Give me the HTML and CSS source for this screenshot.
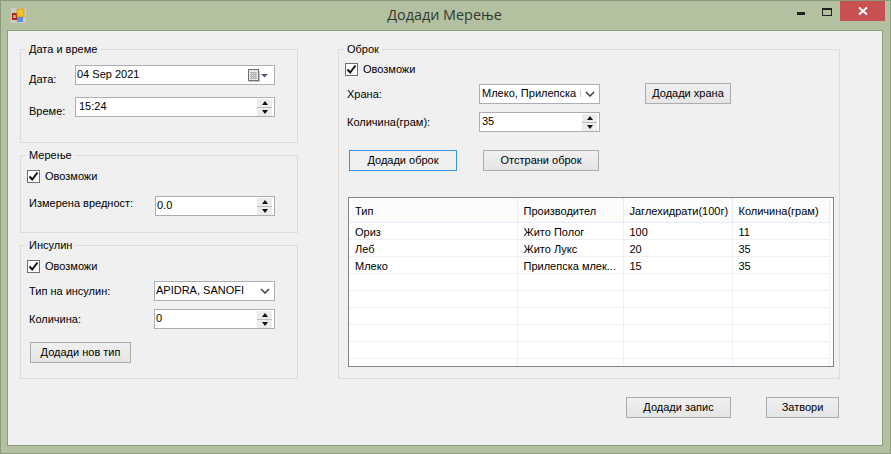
FILE: index.html
```html
<!DOCTYPE html>
<html lang="en">
<head>
    <meta name="viewport" content="width=device-width">
    <title>Додади Мерење</title>
    <link rel="stylesheet" href="styles.css">
</head>

<body>
    <div class="window">
        <div class="titlebar">
            <svg class="app-icon" width="15" height="15" viewBox="0 0 15 15">
                <rect x="0" y="0" width="15" height="15" fill="#c9ccc4"/>
                <rect x="1" y="5" width="5" height="7" fill="#b3201c"/>
                <rect x="2.5" y="7" width="2" height="3" fill="#f0c8b8"/>
                <rect x="6" y="1" width="7" height="8" fill="#f5c020" stroke="#b98a10" stroke-width="0.6"/>
                <rect x="6" y="9" width="6" height="5" fill="#5d8fd8"/>
            </svg>
            <div class="title">Додади Мерење</div>
            <div class="controls">
                <div class="ctl"><span class="ctl-min"></span></div>
                <div class="ctl"><span class="ctl-max"></span></div>
                <div class="ctl-close">
                    <svg width="10" height="10" viewBox="0 0 10 10"><path d="M1 1.5 L9 8.5 M9 1.5 L1 8.5" stroke="#fff" stroke-width="2"/></svg>
                </div>
            </div>
        </div>

        <div class="client">
            <div class="columns">
                <div class="left">
                    <div class="group group-date">
                        <div class="legend">Дата и време</div>
                        <div class="form form-date">
                            <div class="lbl lbl-low">Дата:</div>
                            <div class="field">
                                <span class="val val-date">04 Sep 2021</span>
                                <svg class="cal" width="21" height="13" viewBox="0 0 21 13">
                                    <rect x="0.5" y="0.5" width="10" height="11" fill="#e8e8e8" stroke="#77706a"/>
                                    <path d="M2 3.5h7M2 5.5h7M2 7.5h7M2 9.5h7M3.5 3v7M5.5 3v7M7.5 3v7" stroke="#b4b4b4" stroke-width="1"/>
                                    <path d="M1 12.5h11M11.5 2v10" stroke="#c8c4c0"/>
                                    <path d="M13 5h7l-3.500 3.500z" fill="#4d5b7c"/>
                                </svg>
                            </div>
                            <div class="lbl lbl-low">Време:</div>
                            <div class="field">
                                <span class="val val-time">15:24</span>
                                <div class="spin"><span class="up"></span><span class="down"></span></div>
                            </div>
                        </div>
                    </div>

                    <div class="group group-measure">
                        <div class="legend">Мерење</div>
                        <div class="check check-left">
                            <span class="box"><svg width="11" height="11" viewBox="0 0 11 11"><path d="M1.500 5.500 L4.200 8.500 L9.500 1.500" fill="none" stroke="#111" stroke-width="2"/></svg></span>
                            Овозможи
                        </div>
                        <div class="form form-measure">
                            <div class="lbl lbl-high">Измерена вредност:</div>
                            <div class="field">
                                <span class="val">0.0</span>
                                <div class="spin"><span class="up"></span><span class="down"></span></div>
                            </div>
                        </div>
                    </div>

                    <div class="group group-insulin">
                        <div class="legend">Инсулин</div>
                        <div class="check check-left">
                            <span class="box"><svg width="11" height="11" viewBox="0 0 11 11"><path d="M1.500 5.500 L4.200 8.500 L9.500 1.500" fill="none" stroke="#111" stroke-width="2"/></svg></span>
                            Овозможи
                        </div>
                        <div class="form form-insulin">
                            <div class="lbl">Тип на инсулин:</div>
                            <div class="field">
                                <span class="val">APIDRA, SANOFI</span>
                                <svg class="chev" width="10" height="6" viewBox="0 0 10 6"><path d="M1 1 L5 5 L9 1" fill="none" stroke="#444" stroke-width="1.600"/></svg>
                            </div>
                            <div class="lbl">Количина:</div>
                            <div class="field">
                                <span class="val">0</span>
                                <div class="spin"><span class="up"></span><span class="down"></span></div>
                            </div>
                        </div>
                        <div class="btn btn-newtype">Додади нов тип</div>
                    </div>
                </div>

                <div class="group group-meal">
                    <div class="legend">Оброк</div>
                    <div class="check check-right">
                        <span class="box"><svg width="11" height="11" viewBox="0 0 11 11"><path d="M1.500 5.500 L4.200 8.500 L9.500 1.500" fill="none" stroke="#111" stroke-width="2"/></svg></span>
                        Овозможи
                    </div>
                    <div class="meal-top">
                        <div class="form form-meal">
                            <div class="lbl">Храна:</div>
                            <div class="field">
                                <span class="val val-food">Млеко, Прилепска</span>
                                <svg class="chev" width="10" height="6" viewBox="0 0 10 6"><path d="M1 1 L5 5 L9 1" fill="none" stroke="#444" stroke-width="1.600"/></svg>
                            </div>
                            <div class="lbl">Количина(грам):</div>
                            <div class="field">
                                <span class="val val-qty">35</span>
                                <div class="spin"><span class="up"></span><span class="down"></span></div>
                            </div>
                        </div>
                        <div class="btn btn-food">Додади храна</div>
                    </div>
                    <div class="meal-actions">
                        <div class="btn btn-add">Додади оброк</div>
                        <div class="btn btn-remove">Отстрани оброк</div>
                    </div>
                    <div class="grid-box">
                        <table class="grid">
                            <colgroup>
                                <col class="c1"><col class="c2"><col class="c3"><col class="c4">
                            </colgroup>
                            <thead>
                                <tr><th>Тип</th><th>Производител</th><th>Јаглехидрати(100г)</th><th>Количина(грам)</th></tr>
                            </thead>
                            <tbody>
                                <tr><td>Ориз</td><td>Жито Полог</td><td>100</td><td>11</td></tr>
                                <tr><td>Леб</td><td>Жито Лукс</td><td>20</td><td>35</td></tr>
                                <tr><td>Млеко</td><td>Прилепска млек...</td><td>15</td><td>35</td></tr>
                                <tr><td></td><td></td><td></td><td></td></tr>
                                <tr><td></td><td></td><td></td><td></td></tr>
                                <tr><td></td><td></td><td></td><td></td></tr>
                                <tr><td></td><td></td><td></td><td></td></tr>
                                <tr><td></td><td></td><td></td><td></td></tr>
                                <tr><td></td><td></td><td></td><td></td></tr>
                            </tbody>
                        </table>
                    </div>
                </div>
            </div>

            <div class="footer">
                <div class="btn btn-save">Додади запис</div>
                <div class="btn btn-close">Затвори</div>
            </div>
        </div>
    </div>
</body>
</html>
```

FILE: styles.css
```css
html, body {
    margin: 0;
    padding: 0;
    background-color: #b4c1a1;
}
body {
    font-family: "Liberation Sans", sans-serif;
    font-size: 11px;
    color: #000;
}
.window {
    box-sizing: border-box;
    width: 891px;
    height: 454px;
    border: 1px solid #8b9a7c;
    background-color: #b4c1a1;
    display: flex;
    flex-direction: column;
    overflow: hidden;
}

/* title bar */
.titlebar {
    height: 29px;
    display: grid;
    grid-template-columns: 1fr auto 1fr;
    flex: none;
}
.app-icon {
    margin: 7px 0 0 10px;
}
.title {
    font-family: "Open Sans", sans-serif;
    font-size: 14.400px;
    line-height: 20px;
    padding: 4px 2px 0 0;
    color: #2f3a2f;
}
.controls {
    display: flex;
    justify-content: flex-end;
    align-items: flex-start;
    padding-right: 5px;
}
.ctl {
    width: 26px;
    height: 20px;
    display: flex;
    justify-content: center;
}
.ctl-min {
    width: 8px;
    height: 3px;
    margin-top: 11px;
    background-color: #222;
}
.ctl-max {
    box-sizing: border-box;
    width: 10px;
    height: 8px;
    margin-top: 7px;
    border: 1px solid #222;
    border-top-width: 2px;
}
.ctl-close {
    width: 45px;
    height: 20px;
    background-color: #c75050;
    display: flex;
    align-items: center;
    justify-content: center;
}

/* client area */
.client {
    flex: 1;
    margin: 0 7px 7px 6px;
    border: 1px solid #8b9a7c;
    background-color: #f0f0f0;
    padding: 18px 0 0 12px;
}
.columns {
    display: flex;
    gap: 40px;
}
.left {
    width: 278px;
    display: flex;
    flex-direction: column;
    gap: 12px;
}

/* group boxes */
.group {
    box-sizing: border-box;
    border: 1px solid #dcdcdc;
    padding: 0 8px;
}
.group-date { height: 94px; }
.group-measure { height: 78px; }
.group-insulin { height: 134px; }
.group-meal {
    width: 502px;
    height: 330px;
}
.legend {
    width: fit-content;
    height: 15px;
    line-height: 15px;
    margin: -8px 0 0 -3px;
    padding: 0 3px;
    background-color: #f0f0f0;
}

/* forms */
.form {
    display: grid;
    align-items: center;
}
.form-date {
    grid-template-columns: 46px 200px;
    row-gap: 12px;
    margin-top: 8px;
}
.form-measure {
    grid-template-columns: 126px 120px;
    margin-top: 12px;
}
.form-insulin {
    grid-template-columns: 125px 121px;
    row-gap: 8px;
    margin-top: 7px;
}
.form-meal {
    width: 253px;
    grid-template-columns: 132px 121px;
    row-gap: 8px;
}
.lbl {
    line-height: 15px;
}
.lbl-low {
    line-height: 12px;
    padding-top: 8px;
}
.lbl-high {
    line-height: 14px;
    padding-bottom: 6px;
}
.field {
    box-sizing: border-box;
    height: 20px;
    border: 1px solid #adadb3;
    background-color: #fff;
    display: flex;
    align-items: center;
    justify-content: space-between;
    padding-left: 1px;
    line-height: 15px;
    white-space: nowrap;
    overflow: hidden;
}
.val {
    padding-bottom: 1px;
}
.val-date {
    padding-bottom: 2px;
}
.val-time {
    padding-left: 2px;
}
.val-qty {
    padding-left: 1px;
}
.val-food {
    padding-left: 1px;
    display: flex;
    align-items: center;
    gap: 4px;
}
.val-food::after {
    content: "";
    width: 1px;
    height: 7px;
    background-color: #c8c8c8;
}
.cal {
    margin-right: 5px;
}
.chev {
    margin-right: 4px;
}

/* spinner */
.spin {
    width: 15px;
    height: 17px;
    margin-right: 2px;
    display: flex;
    flex-direction: column;
    gap: 1px;
    background-color: #bdbdbd;
    flex: none;
}
.up, .down {
    flex: 1;
    background-color: #ececec;
    display: flex;
    align-items: center;
    justify-content: center;
}
.up::after {
    content: "";
    border-left: 3.500px solid transparent;
    border-right: 3.500px solid transparent;
    border-bottom: 4px solid #111;
}
.down::after {
    content: "";
    border-left: 3.500px solid transparent;
    border-right: 3.500px solid transparent;
    border-top: 4px solid #111;
}

/* checkboxes */
.check {
    display: flex;
    align-items: center;
    gap: 5px;
    height: 15px;
    line-height: 15px;
}
.check-left {
    margin: 6px 0 0 -2px;
}
.check-right {
    margin: 5px 0 0 -2px;
    height: 14px;
}
.box {
    box-sizing: border-box;
    width: 13px;
    height: 13px;
    border: 1px solid #6f6f6f;
    background-color: #fff;
    display: flex;
    align-items: center;
    justify-content: center;
    flex: none;
}

/* buttons */
.btn {
    box-sizing: border-box;
    height: 21px;
    line-height: 19px;
    text-align: center;
    border: 1px solid #acacac;
    background: linear-gradient(#f0f0f0, #e5e5e5);
    flex: none;
}
.btn-newtype {
    width: 101px;
    margin: 13px 0 0 1px;
}
.btn-food {
    width: 86px;
    margin: -1px 0 0 45px;
}
.btn-add {
    width: 108px;
    border-color: #3c96e6;
    background: #f0f0f0;
}
.btn-remove {
    width: 116px;
}
.btn-save {
    width: 105px;
}
.btn-close {
    width: 73px;
}

/* meal group */
.meal-top {
    display: flex;
    align-items: flex-start;
    margin-top: 8px;
}
.meal-actions {
    display: flex;
    gap: 26px;
    margin: 18px 0 0 2px;
}

/* data grid */
.grid-box {
    box-sizing: border-box;
    width: 486px;
    height: 170px;
    margin: 26px 0 0 1px;
    border: 1px solid #7f858e;
    background-color: #fff;
    overflow: hidden;
}
.grid {
    border-collapse: collapse;
    table-layout: fixed;
    width: 480px;
}
.c1 { width: 168px; }
.c2 { width: 106px; }
.c3 { width: 109px; }
.c4 { width: 97px; }
.grid th {
    height: 24px;
    padding: 2px 0 0 6px;
    box-sizing: border-box;
    font-weight: normal;
    text-align: left;
    background-color: #fcfcfc;
    border-right: 1px solid #e3edf9;
    border-bottom: 1px solid #e3edf9;
    white-space: nowrap;
}
.grid td {
    height: 17px;
    box-sizing: border-box;
    padding: 3px 0 0 6px;
    line-height: 13px;
    border-right: 1px solid #eef1f8;
    border-bottom: 1px solid #f0f0f0;
    white-space: nowrap;
    overflow: hidden;
}

/* bottom buttons */
.footer {
    display: flex;
    justify-content: flex-end;
    gap: 35px;
    margin: 18px 43px 0 0;
}
```
